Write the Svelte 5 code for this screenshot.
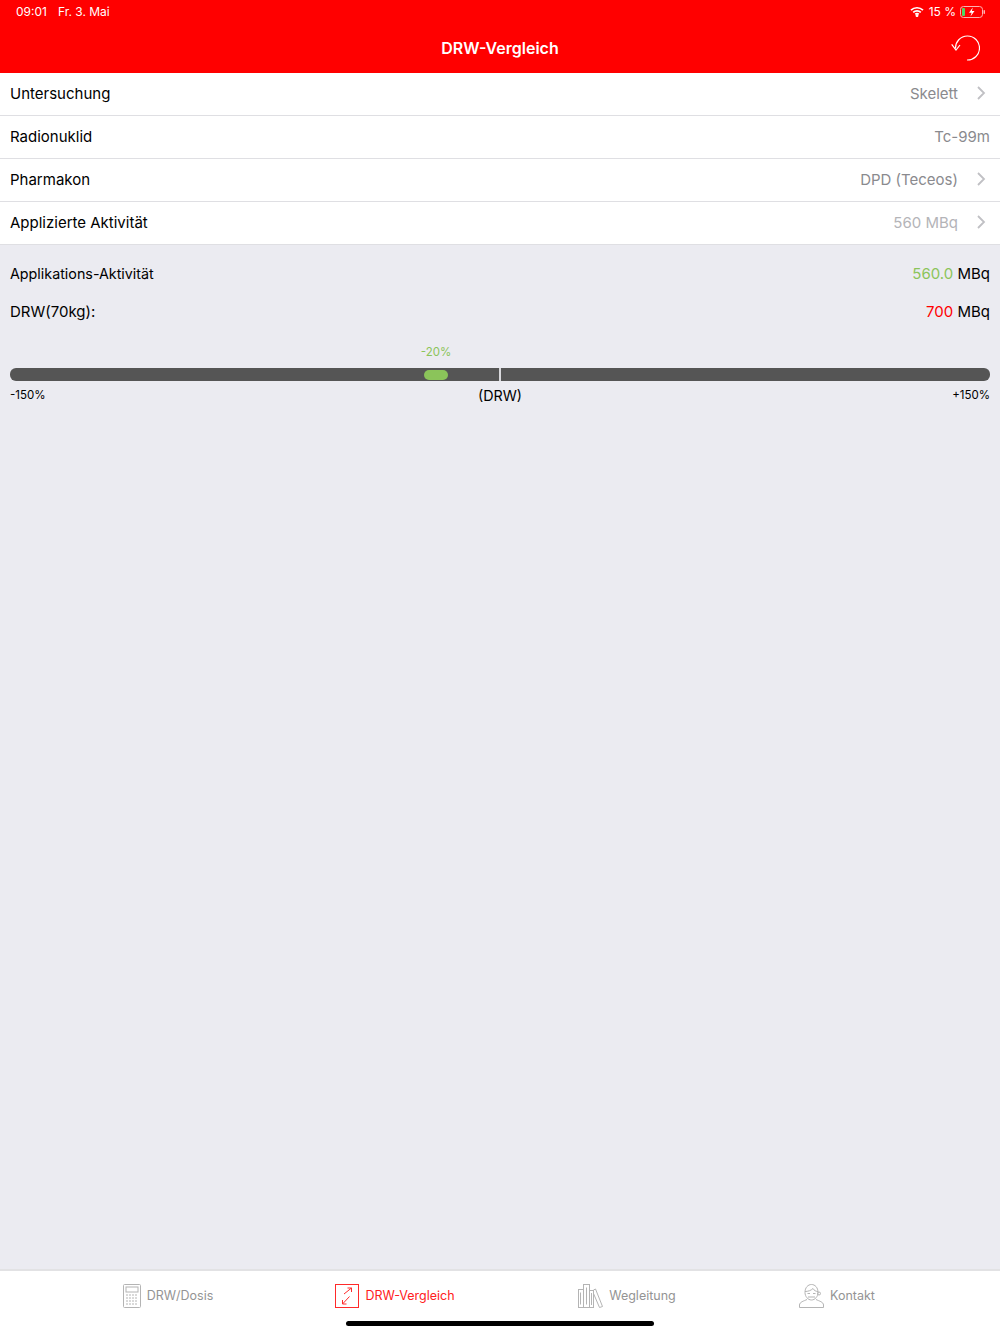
<script>
  const rows = [
    { label: 'Untersuchung', value: 'Skelett', chevron: true },
    { label: 'Radionuklid', value: 'Tc-99m', chevron: false },
    { label: 'Pharmakon', value: 'DPD (Teceos)', chevron: true },
    { label: 'Applizierte Aktivität', value: '560 MBq', chevron: true, light: true }
  ];
</script>

<div class="page">
  <header class="top">
    <div class="status">
      <div class="status-left"><span>09:01</span><span>Fr. 3. Mai</span></div>
      <div class="status-right">
        <svg width="14" height="11" viewBox="0 0 14 11" fill="none" stroke="#fff" stroke-width="1.7">
          <path d="M1 4.2a8.6 8.6 0 0 1 12 0" />
          <path d="M3.2 6.4a5.4 5.4 0 0 1 7.600 0" />
          <path d="M5.3 8.400a2.400 2.400 0 0 1 3.400 0" />
          <circle cx="7" cy="9.600" r=".6" fill="#fff" />
        </svg>
        <span class="pct">15 %</span>
        <svg width="25" height="12" viewBox="0 0 25 12">
          <rect x=".5" y=".5" width="22" height="11" rx="3" fill="none" stroke="#ffb0b0" />
          <rect x="2" y="2" width="3" height="8" rx="1" fill="#4cd964" />
          <rect x="23.500" y="4" width="1.500" height="4" rx=".7" fill="#ffb0b0" />
          <path d="M12.800 1.500 9 6.800h2.600L10.500 10.500l4-5.600h-2.600z" fill="#fff" />
        </svg>
      </div>
    </div>
    <div class="navbar">
      <h1>DRW-Vergleich</h1>
      <svg class="reset" width="30" height="28" viewBox="0 0 30 28" fill="none" stroke="#fff" stroke-width="1.2">
        <path d="M5.500 14.500A12 12 0 1 1 17 26" />
        <path d="M1.700 10.300 6 16l4-5" />
      </svg>
    </div>
  </header>

  <section class="list">
    {#each rows as row}
      <div class="row">
        <span class="label">{row.label}</span>
        <span class="value" class:light={row.light}>{row.value}</span>
        {#if row.chevron}
          <svg class="chevron" width="9" height="14" viewBox="0 0 9 14" fill="none" stroke="#c0c0c4" stroke-width="1.800">
            <path d="M1 1l6 6-6 6" />
          </svg>
        {/if}
      </div>
    {/each}
  </section>

  <main class="content">
    <div class="line first">
      <span class="tight">Applikations-Aktivität</span>
      <span><span class="green">560.0</span> MBq</span>
    </div>
    <div class="line">
      <span>DRW(70kg):</span>
      <span><span class="red">700</span> MBq</span>
    </div>

    <div class="gauge">
      <div class="percent">-20%</div>
      <div class="bar">
        <div class="marker"></div>
        <div class="tick"></div>
      </div>
      <div class="scale">
        <span>-150%</span>
        <span class="mid">(DRW)</span>
        <span>+150%</span>
      </div>
    </div>
  </main>

  <footer class="tabs">
    <div class="tab">
      <svg width="18" height="24" viewBox="0 0 18 24" fill="none" stroke="#b4b4b4">
        <rect x=".5" y=".5" width="17" height="23" rx="1" />
        <rect x="3" y="3" width="12" height="5" />
        <path d="M3 11h12M3 14h12M3 17h12M3 20h12" stroke-dasharray="2 1" />
      </svg>
      <span>DRW/Dosis</span>
    </div>
    <div class="tab active">
      <svg width="24" height="24" viewBox="0 0 24 24" fill="none" stroke="#ff2a2a">
        <rect x=".5" y=".5" width="23" height="23" />
        <path d="M9 10l7.500-6M12.500 4h4v4M14.500 12.500 7.500 20M7.500 16v4h4" />
      </svg>
      <span>DRW-Vergleich</span>
    </div>
    <div class="tab">
      <svg width="25" height="24" viewBox="0 0 25 24" fill="none" stroke="#b4b4b4">
        <rect x=".5" y="5.500" width="5" height="18" />
        <rect x="5.500" y=".5" width="6" height="23" />
        <rect x="11.500" y="6.500" width="4" height="17" />
        <path d="M2.500 8.500v12M8.500 3.500v17M13.500 9v12M15.500 6l2-1 7 17.500-3 1-6-14" />
      </svg>
      <span>Wegleitung</span>
    </div>
    <div class="tab">
      <svg width="25" height="24" viewBox="0 0 25 24" fill="none" stroke="#b4b4b4">
        <path d="M6 8.500C6 3.500 9 .5 12.500 .5S19 3.500 19 8.500c0 4-3 7.500-6.500 7.500S6 12.500 6 8.500z" />
        <path d="M6 7.500c3 0 6-1 8-3 1 2 3 3 5 3" />
        <path d="M8.500 9.500h2.500M14 9.500h2.500M9 13h7" stroke-width="1.200" />
        <circle cx="20" cy="9.500" r="1.500" />
        <path d="M8 15.500c-3 1.500-7.500 2.500-7.500 5.500v2.500h24V21c0-3-4.500-4-7.500-5.500" />
      </svg>
      <span>Kontakt</span>
    </div>
  </footer>

  <div class="home"></div>
</div>

<style>
  :global(body) {
    margin: 0;
  }

  .page {
    position: relative;
    display: flex;
    flex-direction: column;
    height: 1334px;
    background: #ebebf1;
    font-family: Inter, "Liberation Sans", sans-serif;
    color: #000;
  }

  .top {
    background: #ff0000;
    color: #fff;
    height: 73px;
  }

  .status {
    display: flex;
    justify-content: space-between;
    align-items: center;
    height: 23px;
    padding: 0 15px 0 16px;
    font-size: 12px;
  }

  .status-left {
    display: flex;
    gap: 11px;
  }

  .status-right {
    display: flex;
    align-items: center;
    gap: 5px;
  }

  .pct {
    margin-right: -1px;
  }

  .navbar {
    position: relative;
    display: flex;
    justify-content: center;
    align-items: center;
    height: 49px;
  }

  h1 {
    margin: 0;
    font-size: 16px;
    font-weight: 600;
  }

  .reset {
    position: absolute;
    right: 20px;
    top: 11px;
  }

  .list {
    background: #fff;
  }

  .row {
    display: flex;
    align-items: center;
    height: 40px;
    padding: 0 10px 2px;
    border-bottom: 1px solid #dfdfe3;
    font-size: 15px;
  }

  .label {
    flex: 1;
  }

  .value {
    color: #8a8a8e;
  }

  .value.light {
    color: #b4b4b8;
  }

  .chevron {
    margin: 0 4px 0 19px;
  }

  .content {
    flex: 1;
    padding: 0 10px;
    font-size: 15px;
  }

  .line {
    display: flex;
    justify-content: space-between;
    align-items: center;
    height: 38px;
  }

  .line.first {
    margin-top: 9px;
  }

  .tight {
    font-size: 14.300px;
  }

  .green {
    color: #8bc45a;
  }

  .red {
    color: #ff0000;
  }

  .gauge {
    margin-top: 14px;
  }

  .percent {
    width: 852px;
    text-align: center;
    font-size: 11.500px;
    color: #8bc45a;
    line-height: 16px;
  }

  .bar {
    position: relative;
    height: 13px;
    margin-top: 8px;
    border-radius: 6px;
    background: #555555;
  }

  .marker {
    position: absolute;
    left: 414px;
    top: 1.500px;
    width: 24px;
    height: 10px;
    border-radius: 5px;
    background: #8bc45a;
  }

  .tick {
    position: absolute;
    left: 489px;
    top: 0;
    width: 2px;
    height: 13px;
    background: #d8d8dc;
  }

  .scale {
    position: relative;
    display: flex;
    justify-content: space-between;
    align-items: center;
    height: 20px;
    margin-top: 4px;
    font-size: 11.500px;
  }

  .mid {
    position: absolute;
    left: 0;
    right: 0;
    text-align: center;
    font-size: 14.300px;
  }

  .tabs {
    display: grid;
    grid-template-columns: 228px 226px 238px 182px;
    align-items: center;
    height: 49px;
    padding: 0 0 14px 54px;
    background: #fff;
    border-top: 2px solid #e2e2e4;
    font-size: 12.500px;
    color: #949494;
  }

  .tab {
    display: flex;
    justify-content: center;
    align-items: center;
    gap: 6px;
  }

  .tab.active {
    color: #ff2020;
  }

  .home {
    position: absolute;
    left: 346px;
    bottom: 8px;
    width: 308px;
    height: 5px;
    border-radius: 3px;
    background: #000;
  }
</style>
